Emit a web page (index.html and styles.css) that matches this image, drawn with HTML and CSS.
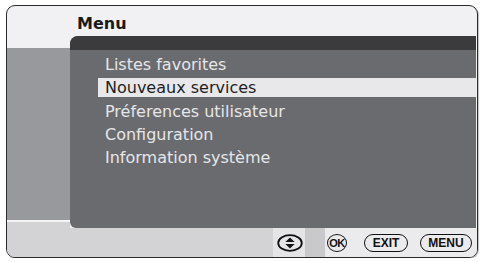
FILE: index.html
```html
<!DOCTYPE html>
<html lang="fr">
<head>
    <meta charset="UTF-8">
    <meta name="viewport" content="width=device-width, initial-scale=1.0">
    <title>Menu</title>
    <link rel="stylesheet" href="styles.css">
</head>
<body>
    <div class="screen">
        <div class="title">Menu</div>
        <div class="main">
            <div class="side">
                <div class="side-top"></div>
                <div class="side-gray"></div>
                <div class="side-line"></div>
                <div class="side-bottom"></div>
            </div>
            <div class="panel">
                <div class="panel-bar"></div>
                <ul class="items">
                    <li>Listes favorites</li>
                    <li class="selected">Nouveaux services</li>
                    <li>Préferences utilisateur</li>
                    <li>Configuration</li>
                    <li>Information système</li>
                </ul>
            </div>
        </div>
        <div class="footer">
            <div class="fill"></div>
            <div class="seg seg-arrows">
                <svg class="arrows" width="26" height="18" viewBox="0 0 26 18">
                    <ellipse cx="13" cy="9" rx="11.8" ry="7.8" fill="none" stroke="#111" stroke-width="1.8"/>
                    <polygon points="13,3.4 8.4,8 17.6,8" fill="#111"/>
                    <polygon points="13,14.6 8.4,10 17.6,10" fill="#111"/>
                </svg>
            </div>
            <div class="seg seg-dark"></div>
            <div class="seg seg-keys">
                <span class="key key-ok">OK</span>
                <span class="key key-exit">EXIT</span>
                <span class="key key-menu">MENU</span>
            </div>
        </div>
    </div>
</body>
</html>
```
FILE: styles.css
```css
body {
    margin: 0;
    padding: 0;
    background-color: #ffffff;
    font-family: "DejaVu Sans", sans-serif;
}
.screen {
    margin: 5px 0 0 6px;
    width: 470px;
    border: 1px solid #2a2a2a;
    border-radius: 9px;
    overflow: hidden;
    background-color: #f1f1f3;
    box-shadow: 1px 1px 1px rgba(0, 0, 0, 0.25);
}
.title {
    height: 30px;
    box-sizing: border-box;
    padding: 8px 0 0 70px;
    font-size: 16px;
    line-height: 20px;
    font-weight: bold;
    color: #1a1a1a;
}
.main {
    display: flex;
    height: 192px;
}
.side {
    width: 63px;
    display: flex;
    flex-direction: column;
}
.side-top {
    height: 12px;
    background-color: #f1f1f3;
}
.side-gray {
    flex: 1;
    background-color: #98999d;
}
.side-line {
    height: 2px;
    background-color: #f4f4f6;
}
.side-bottom {
    height: 6px;
    background-color: #d3d3d5;
}
.panel {
    flex: 1;
    display: flex;
    flex-direction: column;
    margin-right: 1px;
    background-color: #6a6b6f;
    border-radius: 8px 0 0 6px;
    overflow: hidden;
}
.panel-bar {
    height: 14px;
    background-color: #3b3b3d;
}
.items {
    list-style: none;
    margin: 5px 0 0 28px;
    padding: 0;
    display: flex;
    flex-direction: column;
    gap: 4.25px;
}
.items li {
    height: 19px;
    padding-left: 7px;
    font-size: 16px;
    line-height: 19px;
    color: #e6e6e8;
}
.items li.selected {
    background-color: #e8e8ea;
    color: #1e1e1e;
}
.footer {
    display: flex;
    height: 29px;
    background-color: #d3d3d5;
}
.fill {
    flex: 1;
}
.seg {
    display: flex;
    align-items: center;
}
.seg-arrows {
    width: 32px;
    padding-left: 4px;
    box-sizing: border-box;
    background-color: #e5e5e7;
}
.seg-dark {
    width: 20px;
    background-color: #c9c9cb;
}
.seg-keys {
    width: 152px;
    padding-left: 2px;
    box-sizing: border-box;
    background-color: #ebebed;
}
.key {
    height: 18px;
    box-sizing: border-box;
    border: 1.8px solid #111;
    border-radius: 9px;
    display: flex;
    align-items: center;
    justify-content: center;
    font-family: "Liberation Sans", sans-serif;
    font-weight: bold;
    font-size: 12px;
    color: #111;
}
.key-ok {
    width: 20px;
    border-radius: 50%;
    font-size: 11px;
    letter-spacing: -0.5px;
}
.key-exit {
    width: 44px;
    margin-left: 17px;
}
.key-menu {
    width: 52px;
    margin-left: 12px;
}
```
